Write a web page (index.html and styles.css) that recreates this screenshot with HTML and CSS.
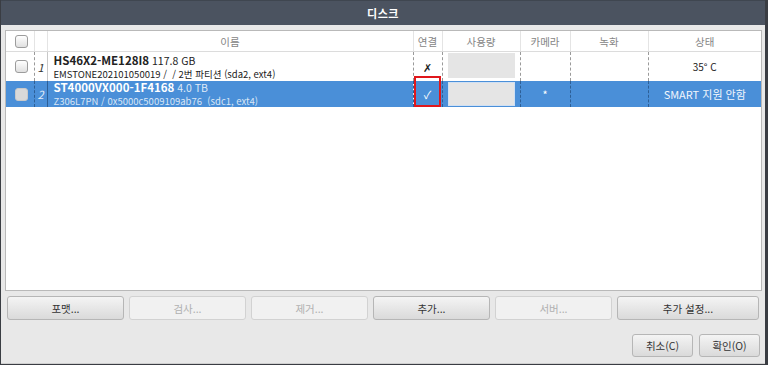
FILE: index.html
```html
<!DOCTYPE html>
<html lang="ko">
<head>
<meta charset="utf-8">
<title>디스크</title>
<link rel="stylesheet" href="styles.css">
</head>
<body>
<div class="window">
  <div class="titlebar">디스크</div>
  <div class="content">
    <div class="tablebox">
      <table class="disks">
        <colgroup>
          <col class="c-cb"><col class="c-num"><col class="c-name"><col class="c-conn"><col class="c-use"><col class="c-cam"><col class="c-rec"><col class="c-state">
        </colgroup>
        <thead>
          <tr>
            <th><span class="cb"></span></th>
            <th class="nosep"></th>
            <th>이름</th>
            <th>연결</th>
            <th>사용량</th>
            <th>카메라</th>
            <th>녹화</th>
            <th>상태</th>
          </tr>
        </thead>
        <tbody>
          <tr class="r1">
            <td class="cbcell"><span class="cb"></span></td>
            <td class="num">1</td>
            <td class="name">
              <div class="l1"><b>HS46X2-ME128I8</b> 117.8 GB</div>
              <div class="l2">EMSTONE202101050019 /&nbsp; / 2번 파티션 (sda2, ext4)</div>
            </td>
            <td class="center mark">✗</td>
            <td class="use"><div class="bar"></div></td>
            <td class="center"></td>
            <td class="center"></td>
            <td class="center state">35° C</td>
          </tr>
          <tr class="r2 sel">
            <td class="cbcell"><span class="cb"></span></td>
            <td class="num">2</td>
            <td class="name">
              <div class="l1"><b>ST4000VX000-1F4168</b> <span class="size">4.0 TB</span></div>
              <div class="l2">Z306L7PN / 0x5000c5009109ab76&nbsp; (sdc1, ext4)</div>
            </td>
            <td class="center mark conn">✓<span class="redbox"></span></td>
            <td class="use"><div class="bar"></div></td>
            <td class="center star">*</td>
            <td class="center"></td>
            <td class="center smart">SMART 지원 안함</td>
          </tr>
        </tbody>
      </table>
    </div>
    <div class="actions">
      <button class="btn">포맷...</button>
      <button class="btn" disabled>검사...</button>
      <button class="btn" disabled>제거...</button>
      <button class="btn">추가...</button>
      <button class="btn" disabled>서버...</button>
      <button class="btn">추가 설정...</button>
    </div>
    <div class="footer">
      <button class="btn small">취소(C)</button>
      <button class="btn small">확인(O)</button>
    </div>
  </div>
</div>
</body>
</html>
```

FILE: styles.css
```css
html, body {
  margin: 0;
  padding: 0;
  background: #3a3d43;
}
body {
  width: 768px;
  height: 365px;
  overflow: hidden;
  font-family: "Noto Sans CJK KR", "Noto Sans", sans-serif;
  font-size: 11px;
  color: #222;
}
.window {
  box-sizing: border-box;
  width: 768px;
  height: 364px;
  border-left: 1px solid #3a3d43;
  border-right: 3px solid #3a3d43;
  display: flex;
  flex-direction: column;
  background: #e8e8e8;
}
.titlebar {
  height: 25px;
  flex: none;
  background: #4b5360;
  border-top: 1px solid #3f4650;
  box-sizing: border-box;
  color: #fff;
  font-weight: bold;
  font-size: 11px;
  display: flex;
  align-items: center;
  justify-content: center;
  letter-spacing: 0.5px;
}
.content {
  flex: 1;
  display: flex;
  flex-direction: column;
  padding: 5px 3px 0 4px;
  border-bottom: 1px solid #cfcfcf;
}
.tablebox {
  height: 261px;
  box-sizing: border-box;
  background: #fff;
  border: 1px solid #b9b9b9;
  flex: none;
}
.disks {
  width: 755px;
  table-layout: fixed;
  border-collapse: collapse;
}
.c-cb { width: 28px; }
.c-num { width: 13px; }
.c-name { width: 366px; }
.c-conn { width: 29px; }
.c-use { width: 78px; }
.c-cam { width: 50px; }
.c-rec { width: 78px; }
.c-state { width: 113px; }

.disks th {
  height: 20px;
  padding: 0;
  font-weight: normal;
  color: #858585;
  font-size: 10.5px;
  border-bottom: 1px solid #dcdcdc;
  border-left: 1px solid #e4e4e4;
  text-align: center;
}
.disks th:first-child { border-left: none; }
.disks th.nosep { border-left: 1px solid #e4e4e4; }
.disks td {
  padding: 0;
  border-left: 1px dashed #9a9a9a;
  vertical-align: middle;
}
.disks td:first-child { border-left: none; }
.disks td.name { border-left: 1px solid #c8c8c8; padding-left: 6px; }
.r1 td { height: 29px; }
.r2 td { height: 26px; }

.cb {
  display: block;
  width: 11px;
  height: 11px;
  margin: 0 auto 0 9px;
  border: 1px solid #9c9c9c;
  border-radius: 3px;
  background: linear-gradient(#ffffff, #e0e0e0);
}
.sel .cb {
  border-color: #c9c9c9;
  background: #d9d9d9;
}
.num {
  text-align: center;
  font-style: italic;
  font-size: 11px;
  color: #333;
}
.name .l1 {
  font-size: 10.5px;
  line-height: 14px;
  white-space: nowrap;
}
.name .l1 b { font-size: 11.5px; }
.name .l2 {
  font-size: 9.5px;
  line-height: 13px;
  white-space: nowrap;
}
.r2 .name .l1, .r2 .name .l2 { line-height: 12.5px; }
.center { text-align: center; }
.mark { font-size: 11px; }
.state { font-size: 10px; }
.use { padding: 0; }
.bar {
  margin: 0 5px;
  height: 25px;
  background: #e5e5e5;
}
.r1 .bar { margin-bottom: 3px; }
.sel .bar {
  height: 24px;
  border: 1px solid #cfe0f4;
  box-sizing: border-box;
  background: #e5e5e5;
}

.sel td {
  background: #4a8fd8;
  color: #fff;
  border-left-color: #2d5f96;
}
.sel td.name { border-left-color: #2d5f96; }
.sel .num { color: #e6eefa; }
.sel .name .l1 b { color: #fff; }
.sel .size { color: #dfe9f7; }
.sel .l2 { color: #d9e6f6; }
.sel .smart { font-size: 11px; color: #f2f6fc; }
.sel .star { font-size: 11px; }

.conn { position: relative; }
.redbox {
  position: absolute;
  left: 0;
  top: -5px;
  width: 27px;
  height: 31px;
  box-sizing: border-box;
  border: 2px solid #e0171c;
}

.actions {
  display: grid;
  grid-template-columns: repeat(5, 117px) 1fr;
  column-gap: 5px;
  margin: 5px 3px 0 2px;
}
.btn {
  height: 24px;
  box-sizing: border-box;
  border: 1px solid #b6b6b6;
  border-radius: 3px;
  background: linear-gradient(#f4f4f4, #dadada);
  font-family: "Noto Sans CJK KR", "Noto Sans", sans-serif;
  font-size: 10.5px;
  color: #333;
  padding: 0;
}
.btn:disabled {
  background: #f1f1f1;
  border-color: #d2d2d2;
  color: #b0b0b0;
}
.footer {
  display: flex;
  justify-content: flex-end;
  gap: 6px;
  margin-top: 14px;
  padding-right: 2px;
}
.btn.small {
  width: 61px;
  height: 23px;
  font-size: 10.5px;
}
```
